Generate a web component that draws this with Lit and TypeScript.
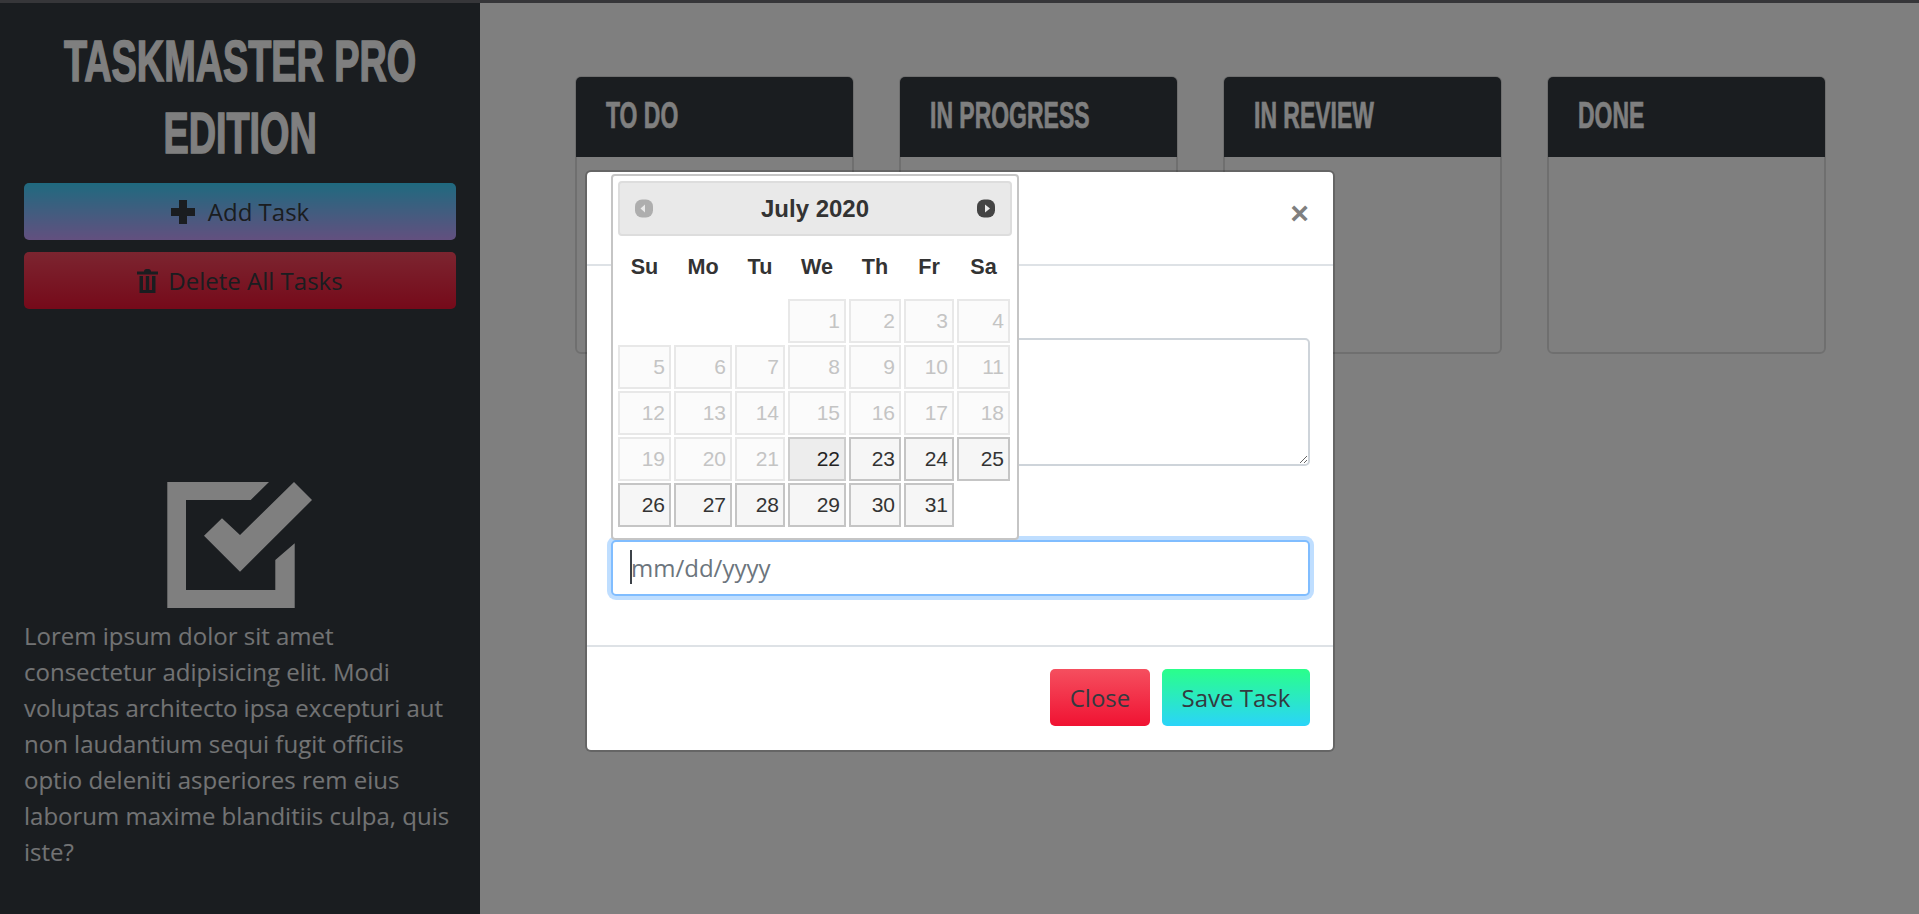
import { LitElement, html, css, svg } from 'lit';
import { customElement } from 'lit/decorators.js';

const WEEK = ['Su', 'Mo', 'Tu', 'We', 'Th', 'Fr', 'Sa'];
const COLUMNS = ['TO DO', 'IN PROGRESS', 'IN REVIEW', 'DONE'];
const TODAY = 22;

const logo = svg`
  <path d="M167.3 482H269L250.7 500H186V590H275.3V560L294.7 543.3V608H167.3Z" />
  <path d="M294 482L312 500L240 571.7L204 535.7L222 518.3L240 535Z" />
`;

@customElement('app-root')
export class AppRoot extends LitElement {
  static styles = css`
    :host {
      display: block;
      position: relative;
      height: 914px;
      overflow: hidden;
      font-family: "Open Sans", sans-serif;
      color: #212529;
    }
    .topline {
      height: 3px;
      background: #6c6c72;
    }
    .page {
      display: flex;
      height: 911px;
      background: #fff;
    }
    .sidebar {
      box-sizing: border-box;
      width: 480px;
      flex: none;
      padding: 22px 24px 0;
      background: #343a40;
      color: #fff;
      display: flex;
      flex-direction: column;
    }
    .brand {
      width: max-content;
      align-self: center;
      margin: 0 0 14px;
      font-family: "Liberation Sans Narrow", sans-serif;
      font-weight: 700;
      font-size: 58px;
      line-height: 72px;
      text-align: center;
      transform: scaleX(0.652);
      -webkit-text-stroke: 1.5px currentColor;
      white-space: nowrap;
    }
    .btn {
      box-sizing: border-box;
      height: 57px;
      border: 0;
      border-radius: 5px;
      font: 24px/1.5 "Open Sans", sans-serif;
      color: #343a40;
      display: flex;
      align-items: center;
      justify-content: center;
      gap: 13px;
    }
    .btn svg { fill: #343a40; }
    .add { background: linear-gradient(#3fd4ff, #c6a0ff); }
    .remove {
      background: linear-gradient(#f84a60, #ec1434);
      margin-top: 12px;
      gap: 10px;
    }
    .logo {
      width: 145px;
      height: 126px;
      align-self: center;
      margin: 173px 1px 0 0;
      fill: #fff;
    }
    .about {
      margin: 10px 0 0;
      font-size: 24px;
      line-height: 36px;
      color: #e4e6e8;
    }
    .board {
      flex: 1;
      display: flex;
      justify-content: center;
      align-items: flex-start;
      gap: 45px;
      padding: 73px 0 0 2px;
    }
    .col {
      box-sizing: border-box;
      width: 279px;
      height: 278px;
      border: 2px solid rgba(0, 0, 0, 0.125);
      border-radius: 6px;
    }
    .col-head {
      box-sizing: border-box;
      height: 80px;
      margin: -1px -1px 0;
      border-radius: 5px 5px 0 0;
      background: #343a40;
      color: #fff;
      padding: 0 0 2px 30px;
      display: flex;
      align-items: center;
    }
    .col-head span {
      font-family: "Liberation Sans Narrow", sans-serif;
      font-weight: 700;
      font-size: 36px;
      transform: scaleX(0.638);
      transform-origin: left center;
      -webkit-text-stroke: 0.6px currentColor;
      white-space: nowrap;
    }
    .backdrop {
      position: absolute;
      inset: 0;
      background: rgba(0, 0, 0, 0.5);
    }
    .modal {
      position: absolute;
      left: 585px;
      top: 170px;
      box-sizing: border-box;
      width: 750px;
      height: 582px;
      background: #fff;
      border: 2px solid rgba(0, 0, 0, 0.2);
      background-clip: padding-box;
      border-radius: 6px;
    }
    .modal-head {
      box-sizing: border-box;
      height: 94px;
      padding: 25px 24px 0;
      border-bottom: 2px solid #dee2e6;
      display: flex;
      justify-content: flex-end;
      align-items: flex-start;
    }
    .dismiss {
      font: 700 32px/1 "Liberation Sans", sans-serif;
      color: #7f7f7f;
    }
    .modal-body {
      box-sizing: border-box;
      height: 379px;
      padding: 72px 23px 0 24px;
    }
    textarea {
      display: block;
      box-sizing: border-box;
      width: 100%;
      height: 128px;
      border: 2px solid #ced4da;
      border-radius: 5px;
      background: #fff;
      margin-bottom: 74px;
    }
    .date-field { position: relative; }
    input {
      display: block;
      box-sizing: border-box;
      width: 100%;
      height: 56px;
      padding: 0 18px 2px;
      border: 2px solid #80bdff;
      border-radius: 5px;
      box-shadow: 0 0 0 4px rgba(0, 123, 255, 0.25);
      font: 24px "Open Sans", sans-serif;
      outline: none;
    }
    input::placeholder { color: #6c757d; }
    .caret {
      position: absolute;
      left: 19px;
      top: 10px;
      width: 2px;
      height: 34px;
      background: #3c4248;
    }
    .modal-foot {
      height: 105px;
      box-sizing: border-box;
      padding: 22px 23px 0;
      border-top: 2px solid #dee2e6;
      display: flex;
      justify-content: flex-end;
      gap: 12px;
    }
    .close { width: 100px; background: linear-gradient(#f54f5f, #f01232); }
    .save { width: 148px; background: linear-gradient(#2aff8a, #2ad4f9); }
    .picker {
      position: absolute;
      left: 611px;
      top: 174px;
      box-sizing: border-box;
      width: 408px;
      height: 366px;
      padding: 5px;
      background: #fff;
      border: 2px solid #c5c5c5;
      border-radius: 4px;
      font-family: "Liberation Sans", Arial, sans-serif;
      color: #333;
    }
    .picker-head {
      box-sizing: border-box;
      height: 55px;
      border: 2px solid #ddd;
      border-radius: 4px;
      background: #e9e9e9;
      display: flex;
      align-items: center;
      justify-content: space-between;
      padding: 0 15px;
    }
    .picker-head strong { font-size: 24px; }
    .nav { width: 18px; height: 19px; }
    .nav.off { opacity: 0.35; }
    .week, .days {
      display: grid;
      grid-template-columns: 53px 58px 50px 58px 52px 50px 53px;
      column-gap: 3px;
    }
    .week {
      height: 54px;
      align-items: center;
      margin-top: 4px;
      text-align: center;
      font-weight: 700;
      font-size: 21.6px;
    }
    .days {
      row-gap: 2px;
      grid-auto-rows: 44px;
      margin-top: 5px;
    }
    .day {
      box-sizing: border-box;
      border: 2px solid #c5c5c5;
      background: #f6f6f6;
      color: #333;
      font-size: 21px;
      line-height: 40px;
      text-align: right;
      padding-right: 4px;
    }
    .day.off {
      border-color: #e8e8e8;
      background: #fbfbfb;
      color: #c4c4c4;
    }
    .day.today {
      background: #ededed;
      border-color: #cdcdcd;
      color: #222;
    }
    .blank { visibility: hidden; }
  `;

  private renderNav(back: boolean) {
    return html`<svg class="nav ${back ? 'off' : ''}" viewBox="0 0 18 19">
      <rect x="0" y="0.5" width="18" height="18" rx="7" fill="#444" />
      <path d=${back ? 'M10 5.5V13.5L5.5 9.5Z' : 'M8 5.5V13.5L13 9.5Z'} fill="#e9e9e9" />
    </svg>`;
  }

  private renderDays() {
    const cells = [];
    for (let i = 0; i < 3; i++) cells.push(html`<div class="blank"></div>`);
    for (let d = 1; d <= 31; d++) {
      const state = d < TODAY ? 'off' : d === TODAY ? 'today' : '';
      cells.push(html`<div class="day ${state}">${d}</div>`);
    }
    return cells;
  }

  render() {
    return html`
      <div class="topline"></div>
      <div class="page">
        <aside class="sidebar">
          <h1 class="brand">TASKMASTER PRO<br />EDITION</h1>
          <div class="btn add">
            <svg width="24" height="24" viewBox="0 0 24 24"><path d="M8 0H16V8H24V16H16V24H8V16H0V8H8Z" /></svg>
            Add Task
          </div>
          <div class="btn remove">
            <svg width="21" height="24" viewBox="0 0 21 24"><path d="M7 2.5Q7 0 9.5 0H11.5Q14 0 14 2.5H21V5.5H0V2.5ZM2.5 7H6V21H8.8V7H12.2V21H15V7H18.5V24H2.5Z" /></svg>
            Delete All Tasks
          </div>
          <svg class="logo" viewBox="167 482 145 126">${logo}</svg>
          <p class="about">
            Lorem ipsum dolor sit amet consectetur adipisicing elit. Modi voluptas architecto ipsa excepturi aut non
            laudantium sequi fugit officiis optio deleniti asperiores rem eius laborum maxime blanditiis culpa, quis iste?
          </p>
        </aside>
        <main class="board">
          ${COLUMNS.map(c => html`<section class="col"><div class="col-head"><span>${c}</span></div></section>`)}
        </main>
      </div>
      <div class="backdrop"></div>
      <div class="modal">
        <div class="modal-head">
          <span class="dismiss">×</span>
        </div>
        <div class="modal-body">
          <textarea></textarea>
          <div class="date-field">
            <input type="text" placeholder="mm/dd/yyyy" />
            <span class="caret"></span>
          </div>
        </div>
        <div class="modal-foot">
          <div class="btn close">Close</div>
          <div class="btn save">Save Task</div>
        </div>
      </div>
      <div class="picker">
        <div class="picker-head">
          ${this.renderNav(true)}
          <strong>July 2020</strong>
          ${this.renderNav(false)}
        </div>
        <div class="week">${WEEK.map(w => html`<span>${w}</span>`)}</div>
        <div class="days">${this.renderDays()}</div>
      </div>
    `;
  }
}
